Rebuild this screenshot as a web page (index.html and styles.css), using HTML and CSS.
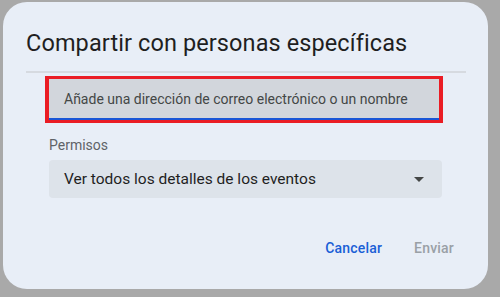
FILE: index.html
```html
<!DOCTYPE html>
<html lang="es">
<head>
    <meta charset="UTF-8">
    <title>Compartir con personas específicas</title>
    <link rel="stylesheet" href="styles.css">
</head>
<body>
    <div class="backdrop">
        <div class="dialog">
            <h1>Compartir con personas específicas</h1>
            <div class="divider"></div>
            <div class="highlight">
                <div class="email-input">Añade una dirección de correo electrónico o un nombre</div>
            </div>
            <div class="label">Permisos</div>
            <div class="select">
                <span>Ver todos los detalles de los eventos</span>
                <span class="arrow"></span>
            </div>
            <div class="actions">
                <button class="btn btn-cancel">Cancelar</button>
                <button class="btn btn-send">Enviar</button>
            </div>
        </div>
    </div>
</body>
</html>
```

FILE: styles.css
```css
* {
    margin: 0;
    padding: 0;
    box-sizing: border-box;
}

body {
    width: 500px;
    height: 297px;
    overflow: hidden;
    background-color: #a9a9a9;
    font-family: Roboto, "Liberation Sans", sans-serif;
}

.backdrop {
    padding: 2px 12px 8px 3px;
}

.dialog {
    width: 485px;
    height: 287px;
    background-color: #e8eef7;
    border-radius: 24px;
    padding: 28px 22px 0 23px;
}

h1 {
    font-size: 23.5px;
    font-weight: 400;
    color: #1f1f1f;
    line-height: 26px;
    letter-spacing: 0.1px;
}

.divider {
    height: 2px;
    background-color: #d6dae0;
    margin-top: 15px;
}

.highlight {
    margin: 3px 0 0 19px;
    width: 398px;
    border: 3px solid #ea1c24;
    border-left-width: 4px;
    border-right-width: 4px;
}

.email-input {
    height: 41px;
    background-color: #d2d6dc;
    border-bottom: 2px solid #1a56d6;
    padding: 12px 0 0 15px;
    font-size: 14px;
    color: #444746;
}

.label {
    margin: 13px 0 0 23px;
    font-size: 14px;
    color: #5f6368;
    line-height: 18px;
}

.select {
    margin: 6px 0 0 23px;
    width: 393px;
    height: 38px;
    background-color: #dde3ea;
    border-radius: 4px;
    display: flex;
    align-items: center;
    justify-content: space-between;
    padding: 0 18px 0 15px;
    font-size: 15.5px;
    color: #1f1f1f;
}

.arrow {
    width: 0;
    height: 0;
    border-left: 5px solid transparent;
    border-right: 5px solid transparent;
    border-top: 5px solid #444746;
}

.actions {
    display: flex;
    justify-content: flex-end;
    gap: 32px;
    margin-top: 42px;
    padding-right: 12px;
}

.btn {
    background: none;
    border: none;
    font-family: Roboto, "Liberation Sans", sans-serif;
    font-size: 14px;
    font-weight: 500;
    letter-spacing: 0.2px;
}

.btn-cancel {
    color: #1a5fd6;
}

.btn-send {
    color: #9aa0a6;
}
```
